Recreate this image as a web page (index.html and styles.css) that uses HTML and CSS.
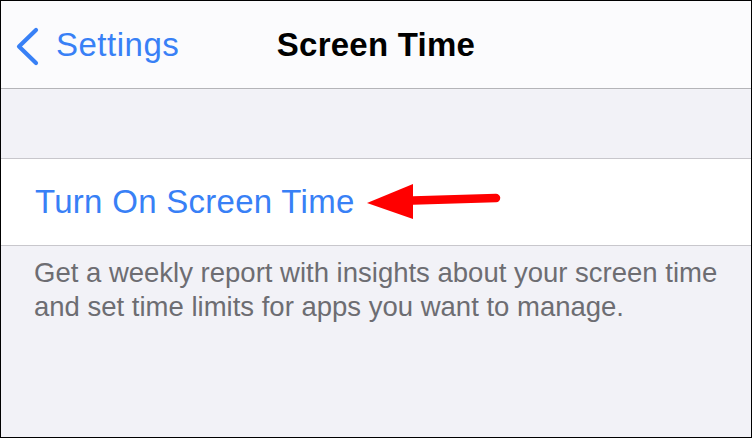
FILE: index.html
```html
<!DOCTYPE html>
<html lang="en">
<head>
  <meta charset="UTF-8" />
  <title>Screen Time</title>
  <meta name="viewport" content="width=device-width, initial-scale=1" />
  <link rel="stylesheet" href="styles.css">
</head>
<body>
  <div class="screen">
    <!-- Navigation bar -->
    <header class="navbar">
      <a class="back" href="#">
        <svg class="chevron" width="40" height="88" viewBox="0 0 40 88" aria-hidden="true">
          <path d="M37 29 L20 45.5 L37 62" fill="none" stroke="#3880f6" stroke-width="4.2" stroke-linecap="round" stroke-linejoin="round"/>
        </svg>
        <span>Settings</span>
      </a>
      <h1>Screen Time</h1>
      <div></div>
    </header>

    <div class="spacer"></div>

    <!-- Single action row -->
    <section class="group">
      <a class="row" href="#">Turn On Screen Time</a>
      <svg class="pointer" width="140" height="44" viewBox="0 0 140 44" aria-hidden="true">
        <path d="M46 20.5 L129 18" stroke="#ff0000" stroke-width="8.5" stroke-linecap="round"/>
        <polygon points="0,23 46,4 46,39" fill="#ff0000"/>
      </svg>
    </section>

    <p class="footer">Get a weekly report with insights about your screen time and set time limits for apps you want to manage.</p>
  </div>
</body>
</html>
```

FILE: styles.css
```css
html,body{margin:0;height:100%;background:#f2f2f7;font-family:"Liberation Sans",Arial,sans-serif}
.screen{box-sizing:border-box;width:752px;height:438px;border:1px solid #000;background:#f2f2f7;overflow:hidden}

.navbar{display:grid;grid-template-columns:1fr auto 1fr;align-items:center;height:87px;background:#fbfbfd;border-bottom:1px solid #b4b4b8}
.back{display:flex;align-items:center;color:#3880f6;text-decoration:none;font-size:33px;letter-spacing:0.5px}
.chevron{display:block;margin-left:-2px}
.back span{margin-left:17px}
.navbar h1{margin:0;font-size:33px;font-weight:bold;color:#000;letter-spacing:0.25px}

.spacer{height:69px}

.group{position:relative;display:flex;align-items:center;height:86px;background:#fff;border-top:1px solid #c8c7cc;border-bottom:1px solid #c8c7cc}
.row{padding-left:34px;font-size:33px;color:#3880f6;text-decoration:none;letter-spacing:0.28px}
.pointer{position:absolute;left:366px;top:21px}

.footer{margin:0;padding:10px 20px 0 33px;font-size:27.5px;line-height:34px;color:#6d6d72}
```
